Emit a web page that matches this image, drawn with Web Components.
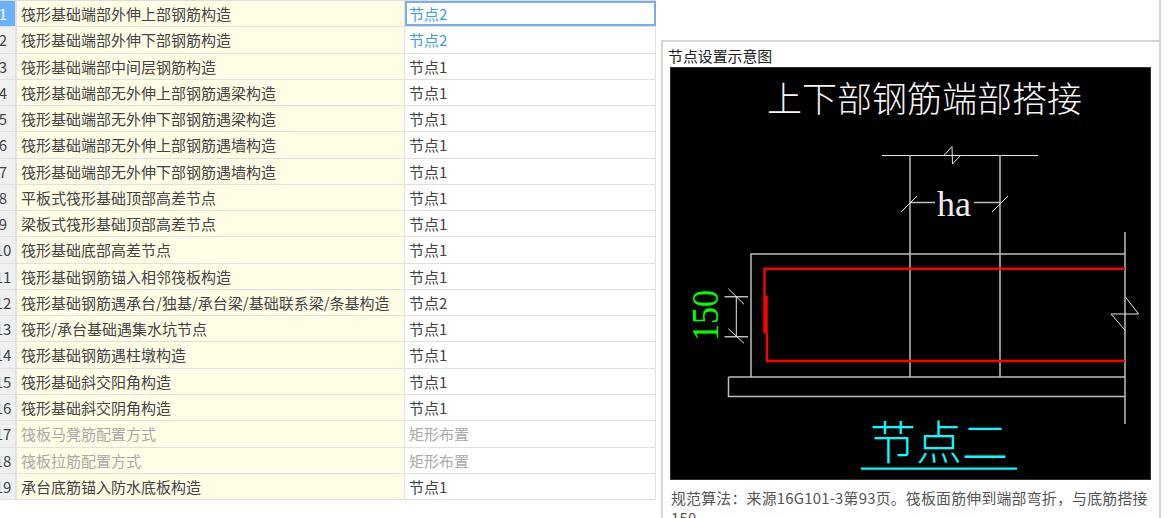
<!DOCTYPE html>
<html lang="zh">
<head>
<meta charset="utf-8">
<title>节点设置</title>
<style>
  html, body { margin: 0; height: 100%; overflow: hidden; background: #fff; }
  body { font-family: "Noto Sans CJK SC", "Noto Sans", sans-serif; }
</style>
</head>
<body>
<node-settings>
  <node-table slot="table"></node-table>
  <diagram-panel slot="panel" heading="节点设置示意图">
    <node-diagram></node-diagram>
    <span slot="note">规范算法：来源16G101-3第93页。筏板面筋伸到端部弯折，与底筋搭接150</span>
  </diagram-panel>
</node-settings>

<script>
const rows = [
  ['筏形基础端部外伸上部钢筋构造', '节点2', 'changed'],
  ['筏形基础端部外伸下部钢筋构造', '节点2', 'changed'],
  ['筏形基础端部中间层钢筋构造', '节点1'],
  ['筏形基础端部无外伸上部钢筋遇梁构造', '节点1'],
  ['筏形基础端部无外伸下部钢筋遇梁构造', '节点1'],
  ['筏形基础端部无外伸上部钢筋遇墙构造', '节点1'],
  ['筏形基础端部无外伸下部钢筋遇墙构造', '节点1'],
  ['平板式筏形基础顶部高差节点', '节点1'],
  ['梁板式筏形基础顶部高差节点', '节点1'],
  ['筏形基础底部高差节点', '节点1'],
  ['筏形基础钢筋锚入相邻筏板构造', '节点1'],
  ['筏形基础钢筋遇承台/独基/承台梁/基础联系梁/条基构造', '节点2'],
  ['筏形/承台基础遇集水坑节点', '节点1'],
  ['筏形基础钢筋遇柱墩构造', '节点1'],
  ['筏形基础斜交阳角构造', '节点1'],
  ['筏形基础斜交阴角构造', '节点1'],
  ['筏板马凳筋配置方式', '矩形布置', 'disabled'],
  ['筏板拉筋配置方式', '矩形布置', 'disabled'],
  ['承台底筋锚入防水底板构造', '节点1']
];

class NodeSettings extends HTMLElement {
  constructor() {
    super();
    this.attachShadow({ mode: 'open' }).innerHTML = `
      <style>
        :host { display: flex; align-items: flex-start; width: 1167px; height: 518px; overflow: hidden; }
        .side { display: block; flex: none; box-sizing: border-box; width: 500px; height: 518px; margin-left: 5px; padding-top: 40px; border-right: 2px solid #d4d4d4; }
      </style>
      <slot name="table"></slot>
      <div class="side"><slot name="panel"></slot></div>
    `;
  }
}

class NodeTable extends HTMLElement {
  constructor() {
    super();
    this.attachShadow({ mode: 'open' }).innerHTML = `
      <style>
        :host { display: block; width: 656px; flex: none; border-top: 1px solid #ddd; font-size: 15px; color: #444; }
      </style>
      <slot></slot>
    `;
    rows.forEach((r, i) => {
      const row = document.createElement('node-row');
      row.setAttribute('index', i + 1);
      row.setAttribute('name', r[0]);
      row.setAttribute('value', r[1]);
      if (r[2]) row.setAttribute('state', r[2]);
      if (i === 0) row.setAttribute('selected', '');
      this.appendChild(row);
    });
  }
}

class NodeRow extends HTMLElement {
  connectedCallback() {
    if (this.shadowRoot) return;
    const root = this.attachShadow({ mode: 'open' });
    root.innerHTML = `
      <style>
        :host { display: grid; grid-template-columns: 17px 388px 1fr; grid-template-rows: minmax(0, 1fr); height: 26.27px; box-sizing: border-box; border-bottom: 1.5px solid #e0e0e0; line-height: 26.5px; }
        .num { background: #f0f0f0; border-right: 2px solid #e3e3e3; display: flex; justify-content: center; width: 6px; padding-right: 9px; white-space: nowrap; color: #444; }
        .name { background: #fffde6; padding-left: 4px; white-space: nowrap; border-right: 1px solid #e3e3e3; }
        .value { padding-left: 4px; border-right: 1px solid #e3e3e3; }
        :host([state="changed"]) .value { color: #3a9bf4; }
        :host([state="disabled"]) .name, :host([state="disabled"]) .value { color: #a9a9a9; }
        :host([selected]) .num { background: #6bb0fb; color: #fff; }
        :host([selected]) .value { outline: 2px solid #79aee9; outline-offset: -2px; }
      </style>
      <div class="num"></div><div class="name"></div><div class="value"></div>
    `;
    root.querySelector('.num').textContent = this.getAttribute('index');
    root.querySelector('.name').textContent = this.getAttribute('name');
    root.querySelector('.value').textContent = this.getAttribute('value');
  }
}

class DiagramPanel extends HTMLElement {
  constructor() {
    super();
    this.attachShadow({ mode: 'open' }).innerHTML = `
      <style>
        :host { display: block; width: 500px; box-sizing: border-box; border: 2px solid #d4d4d4; border-right: 0; padding: 0 7px; height: 520px; font-size: 14.9px; }
        .heading { height: 25px; line-height: 28px; margin-left: -2px; color: #222; white-space: nowrap; }
        .figure { display: block; width: 481px; height: 413px; }
        .note { margin: 8px 0 0 1px; line-height: 20px; color: #555; width: 481px; letter-spacing: 0.22px; }
      </style>
      <div class="heading"></div>
      <div class="figure"><slot></slot></div>
      <div class="note"><slot name="note"></slot></div>
    `;
    this.shadowRoot.querySelector('.heading').textContent = this.getAttribute('heading');
  }
}

class NodeDiagram extends HTMLElement {
  constructor() {
    super();
    this.attachShadow({ mode: 'open' }).innerHTML = `
      <style>
        :host { display: block; width: 481px; height: 413px; }
        svg { display: block; background: #000; }
        .cjk { font-family: "Noto Sans CJK SC", sans-serif; font-weight: 300; }
        .latin { font-family: "Liberation Serif", serif; }
        .g { fill: none; stroke: #bdbdbd; stroke-width: 1.5; }
        .w { fill: none; stroke: #e6e6e6; stroke-width: 1; }
        .r { fill: none; stroke: #f00; stroke-width: 2.4; }
      </style>
      <svg width="481" height="413" viewBox="670 67 481 413">
        <rect x="670.5" y="67.5" width="480" height="412" fill="none" stroke="#333"/>
        <text class="cjk" x="767" y="112" font-size="35" fill="#f4f4f4">上下部钢筋端部搭接</text>

        <path class="w" stroke-width="1.5" d="M882 155.5H1038M944 155.5L952 146.5L952.5 164L960.5 155.5"/>
        <path class="g" d="M910 155V377M1000 155V377"/>
        <path class="g" d="M910 202.5H935M974 202.5H1000"/>
        <path class="w" d="M901 212L917 196M992 212L1008 196"/>
        <text class="latin" x="937" y="216" font-size="36" fill="#eee">ha</text>

        <path class="g" d="M751 377V254H1125M728.5 377H1125M728.5 377V396.5H1125M1125 232V424"/>
        <path class="w" d="M1125.5 297L1138.5 314H1111L1125 330"/>

        <path class="r" d="M1125 268.7H764.5V297M767 333V361H1125"/>
        <rect x="763.3" y="296" width="4.4" height="37.5" fill="#f00"/>

        <path class="g" d="M724.5 296.7H748M724.5 336.7H748"/>
        <path class="w" d="M736.3 296.7V336.7M728.3 288.7L744 304.3M728.3 328.7L744 343.3"/>
        <text class="latin" transform="translate(718,341) rotate(-90)" font-size="38" textLength="51" lengthAdjust="spacingAndGlyphs" fill="#0f0">150</text>

        <text class="cjk" x="870" y="459" font-size="46" fill="#0ff">节点二</text>
        <path d="M861 468.7H1017" stroke="#0ff" stroke-width="2.2" fill="none"/>
      </svg>
    `;
  }
}

customElements.define('node-settings', NodeSettings);
customElements.define('node-table', NodeTable);
customElements.define('node-row', NodeRow);
customElements.define('diagram-panel', DiagramPanel);
customElements.define('node-diagram', NodeDiagram);
</script>
</body>
</html>
